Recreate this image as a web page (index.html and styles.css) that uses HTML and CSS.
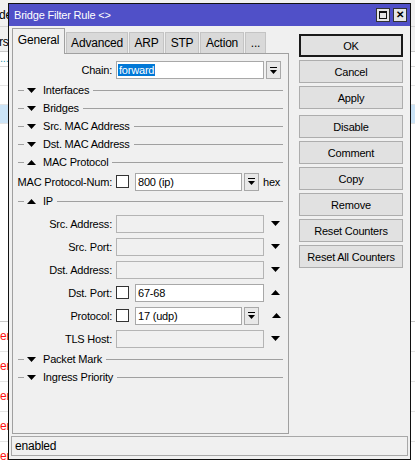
FILE: index.html
```html
<!DOCTYPE html>
<html lang="en">
<head>
  <meta charset="UTF-8" />
  <title>Bridge Filter Rule</title>
  <link rel="stylesheet" href="styles.css">
</head>
<body>

  <!-- list window behind the dialog -->
  <div class="bg">
    <div class="bg-top"><span class="bg-txt">de</span></div>
    <div class="bg-tab"><span class="bg-txt">rs</span></div>
    <div class="bg-head"><span class="bg-dots">...</span></div>
    <div class="bg-row"></div>
    <div class="bg-row"></div>
    <div class="bg-row sel"></div>
    <div class="bg-space"></div>
    <div class="bg-row log"><span class="bg-red">em</span></div>
    <div class="bg-row log"><span class="bg-red">em</span></div>
    <div class="bg-row log"><span class="bg-red">em</span></div>
    <div class="bg-row log"><span class="bg-red">em</span></div>
    <div class="bg-row log"><span class="bg-red">em</span></div>
  </div>

  <!-- dialog -->
  <div class="dialog">
    <div class="titlebar">
      <span class="title">Bridge Filter Rule &lt;&gt;</span>
      <div class="tb-btns">
        <span class="tb-btn"><span class="max-box"></span></span>
        <span class="tb-btn close">✕</span>
      </div>
    </div>

    <div class="dlg-body">
      <div class="dlg-main">
        <div class="tabs-col">
          <div class="tabbar">
            <div class="tab active">General</div>
            <div class="tab w-adv">Advanced</div>
            <div class="tab w-arp">ARP</div>
            <div class="tab w-stp">STP</div>
            <div class="tab w-act">Action</div>
            <div class="tab w-more">...</div>
          </div>

          <div class="panel">
            <div class="field first">
              <label class="lbl">Chain:</label>
              <div class="input chain"><span class="selected">forward</span></div>
              <span class="dd"><svg viewBox="0 0 7 7"><path d="M0 0h7v1H0zM0 3h7L3.5 7z"/></svg></span>
            </div>

            <div class="section"><span class="dash"></span><svg class="tri" viewBox="0 0 9 5"><path d="M0 0h9L4.5 5z"/></svg><span class="sec-name">Interfaces</span><span class="rule"></span></div>
            <div class="section"><span class="dash"></span><svg class="tri" viewBox="0 0 9 5"><path d="M0 0h9L4.5 5z"/></svg><span class="sec-name">Bridges</span><span class="rule"></span></div>
            <div class="section"><span class="dash"></span><svg class="tri" viewBox="0 0 9 5"><path d="M0 0h9L4.5 5z"/></svg><span class="sec-name">Src. MAC Address</span><span class="rule"></span></div>
            <div class="section"><span class="dash"></span><svg class="tri" viewBox="0 0 9 5"><path d="M0 0h9L4.5 5z"/></svg><span class="sec-name">Dst. MAC Address</span><span class="rule"></span></div>
            <div class="section"><span class="dash"></span><svg class="tri" viewBox="0 0 9 5"><path d="M0 5h9L4.5 0z"/></svg><span class="sec-name">MAC Protocol</span><span class="rule"></span></div>

            <div class="field mac">
              <label class="lbl">MAC Protocol-Num:</label>
              <span class="chk"></span>
              <div class="input short">800 (ip)</div>
              <span class="dd"><svg viewBox="0 0 7 7"><path d="M0 0h7v1H0zM0 3h7L3.5 7z"/></svg></span>
              <span class="unit">hex</span>
            </div>

            <div class="section"><span class="dash"></span><svg class="tri" viewBox="0 0 9 5"><path d="M0 5h9L4.5 0z"/></svg><span class="sec-name">IP</span><span class="rule"></span></div>

            <div class="field ip-first">
              <label class="lbl">Src. Address:</label>
              <div class="input off"></div>
              <svg class="tri side" viewBox="0 0 9 5"><path d="M0 0h9L4.5 5z"/></svg>
            </div>
            <div class="field">
              <label class="lbl">Src. Port:</label>
              <div class="input off"></div>
              <svg class="tri side" viewBox="0 0 9 5"><path d="M0 0h9L4.5 5z"/></svg>
            </div>
            <div class="field">
              <label class="lbl">Dst. Address:</label>
              <div class="input off"></div>
              <svg class="tri side" viewBox="0 0 9 5"><path d="M0 0h9L4.5 5z"/></svg>
            </div>
            <div class="field">
              <label class="lbl">Dst. Port:</label>
              <span class="chk"></span>
              <div class="input mid">67-68</div>
              <svg class="tri side" viewBox="0 0 9 5"><path d="M0 5h9L4.5 0z"/></svg>
            </div>
            <div class="field">
              <label class="lbl">Protocol:</label>
              <span class="chk"></span>
              <div class="input short">17 (udp)</div>
              <span class="dd"><svg viewBox="0 0 7 7"><path d="M0 0h7v1H0zM0 3h7L3.5 7z"/></svg></span>
              <svg class="tri side after-dd" viewBox="0 0 9 5"><path d="M0 5h9L4.5 0z"/></svg>
            </div>
            <div class="field">
              <label class="lbl">TLS Host:</label>
              <div class="input off"></div>
              <svg class="tri side" viewBox="0 0 9 5"><path d="M0 0h9L4.5 5z"/></svg>
            </div>

            <div class="section"><span class="dash"></span><svg class="tri" viewBox="0 0 9 5"><path d="M0 0h9L4.5 5z"/></svg><span class="sec-name">Packet Mark</span><span class="rule"></span></div>
            <div class="section"><span class="dash"></span><svg class="tri" viewBox="0 0 9 5"><path d="M0 0h9L4.5 5z"/></svg><span class="sec-name">Ingress Priority</span><span class="rule"></span></div>
          </div>
        </div>

        <div class="btn-col">
          <button class="btn default">OK</button>
          <button class="btn">Cancel</button>
          <button class="btn">Apply</button>
          <button class="btn split">Disable</button>
          <button class="btn">Comment</button>
          <button class="btn">Copy</button>
          <button class="btn">Remove</button>
          <button class="btn">Reset Counters</button>
          <button class="btn">Reset All Counters</button>
        </div>
      </div>

      <div class="status">enabled</div>
    </div>
  </div>

</body>
</html>
```

FILE: styles.css
```css
body {
  margin: 0;
  font-family: 'Liberation Sans', Arial, sans-serif;
  font-size: 11px;
  letter-spacing: -0.2px;
  color: #000;
  background: #fff;
  width: 415px;
  height: 462px;
  overflow: hidden;
  position: relative;
}

/* background list window */
.bg {
  width: 415px;
  height: 462px;
}

.bg-top {
  height: 27px;
  background: #f0f0f0;
  border-bottom: 1px solid #d4d4d4;
  box-sizing: border-box;
}

.bg-tab {
  height: 25px;
  background: #f0f0f0;
  border-bottom: 1px solid #c8c8c8;
  box-sizing: border-box;
}

.bg-head {
  height: 14px;
  border-bottom: 1px solid #d8d8d8;
}

.bg-txt {
  display: block;
  margin-left: -1px;
  padding-top: 8px;
  font-size: 12px;
}

.bg-dots {
  color: #3a9ab0;
}

.bg-row {
  height: 18px;
  border-bottom: 1px solid #e4e4e4;
}

.bg-row.sel {
  background: #cce4f7;
}

.bg-space {
  height: 197px;
  border-bottom: 1px solid #c8c8c8;
}

.bg-row.log {
  height: 29px;
  line-height: 29px;
  font-size: 12px;
}

.bg-red {
  color: #ff1010;
}

/* dialog window */
.dialog {
  position: absolute;
  left: 8px;
  top: 3px;
  width: 403px;
  height: 457px;
  box-sizing: border-box;
  border: 1px solid #111;
  background: #f0f0f0;
  display: flex;
  flex-direction: column;
}

.titlebar {
  height: 22px;
  background: #5050c8;
  display: flex;
  align-items: center;
  justify-content: space-between;
  padding: 0 3px 0 5px;
}

.title {
  color: #fff;
  font-size: 11px;
}

.tb-btns {
  display: flex;
  gap: 3px;
}

.tb-btn {
  width: 14px;
  height: 14px;
  box-sizing: border-box;
  background: #e6e6e6;
  border: 1px solid #333;
  display: flex;
  align-items: center;
  justify-content: center;
}

.max-box {
  width: 8px;
  height: 8px;
  box-sizing: border-box;
  border: 1px solid #111;
  border-top-width: 2px;
}

.tb-btn.close {
  font-size: 10px;
  font-weight: bold;
  line-height: 1;
}

.dlg-body {
  flex: 1;
  padding-top: 2px;
}

.dlg-main {
  display: flex;
  height: 406px;
}

.tabs-col {
  margin-left: 3px;
  width: 277px;
  display: flex;
  flex-direction: column;
}

.tabbar {
  height: 25px;
  display: flex;
  align-items: flex-end;
  position: relative;
  z-index: 1;
}

.tab {
  height: 21px;
  line-height: 20px;
  box-sizing: border-box;
  background: #d9d9d9;
  border: 1px solid #c4c4c4;
  border-bottom: none;
  margin-left: 1px;
  font-size: 12px;
  text-align: center;
}

.tab.active {
  width: 53px;
  height: 26px;
  line-height: 22px;
  margin-left: 0;
  background: #f0f0f0;
  border-color: #a0a0a0;
  margin-bottom: -1px;
}

.w-adv { width: 62px; }
.w-arp { width: 35px; }
.w-stp { width: 34px; }
.w-act { width: 44px; }
.w-more { width: 21px; }

.panel {
  flex: 1;
  border: 1px solid #a0a0a0;
  box-sizing: border-box;
}

.field {
  height: 23px;
  display: flex;
  align-items: center;
}

.field.first {
  height: 22px;
  margin-top: 5px;
}

.field.mac {
  height: 21px;
}

.field.ip-first {
  margin-top: 2px;
}

.lbl {
  width: 99px;
  margin-right: 4px;
  white-space: nowrap;
  display: flex;
  justify-content: flex-end;
}

.input {
  height: 18px;
  box-sizing: border-box;
  border: 1px solid #a8a8a8;
  background: #fff;
  line-height: 16px;
  padding-left: 2px;
  width: 148px;
  overflow: hidden;
  white-space: nowrap;
}

.input.off {
  background: #f0f0f0;
  border-color: #b4b4b4;
}

.input.short {
  width: 107px;
}

.input.mid {
  width: 129px;
}

.selected {
  background: #0078d7;
  color: #fff;
  padding: 0 1px;
  margin-left: -1px;
}

.chk {
  width: 13px;
  height: 13px;
  box-sizing: border-box;
  border: 1px solid #333;
  background: #fff;
  margin-right: 6px;
}

.dd {
  width: 15px;
  height: 18px;
  box-sizing: border-box;
  margin-left: 2px;
  border: 1px solid #a8a8a8;
  background: #e8e8e8;
  display: flex;
  align-items: center;
  justify-content: center;
}

.dd svg {
  width: 7px;
  height: 7px;
}

.unit {
  margin-left: 4px;
}

.tri {
  width: 9px;
  height: 5px;
  flex: none;
}

.tri.side {
  margin-left: 7px;
}

.tri.side.after-dd {
  margin-left: 13px;
}

.section {
  height: 18px;
  display: flex;
  align-items: center;
}

.dash {
  width: 6px;
  height: 1px;
  background: #a0a0a0;
  margin: 0 3px 0 5px;
}

.sec-name {
  margin-left: 7px;
  white-space: nowrap;
}

.rule {
  flex: 1;
  height: 1px;
  background: #a0a0a0;
  margin: 0 5px 0 4px;
}

.btn-col {
  margin-left: 10px;
  width: 104px;
  padding-top: 6px;
  display: flex;
  flex-direction: column;
  gap: 3px;
}

.btn {
  height: 23px;
  font-family: inherit;
  font-size: 11px;
  letter-spacing: -0.2px;
  color: #000;
  background: #e1e1e1;
  border: 1px solid #adadad;
  padding: 0;
}

.btn.default {
  border: 2px solid #1a1a1a;
}

.btn.split {
  margin-top: 3px;
}

.status {
  margin: 2px 0 0 2px;
  width: 397px;
  height: 20px;
  box-sizing: border-box;
  border: 1px solid #a8a8a8;
  line-height: 18px;
  padding-left: 3px;
  font-size: 12px;
}
```
